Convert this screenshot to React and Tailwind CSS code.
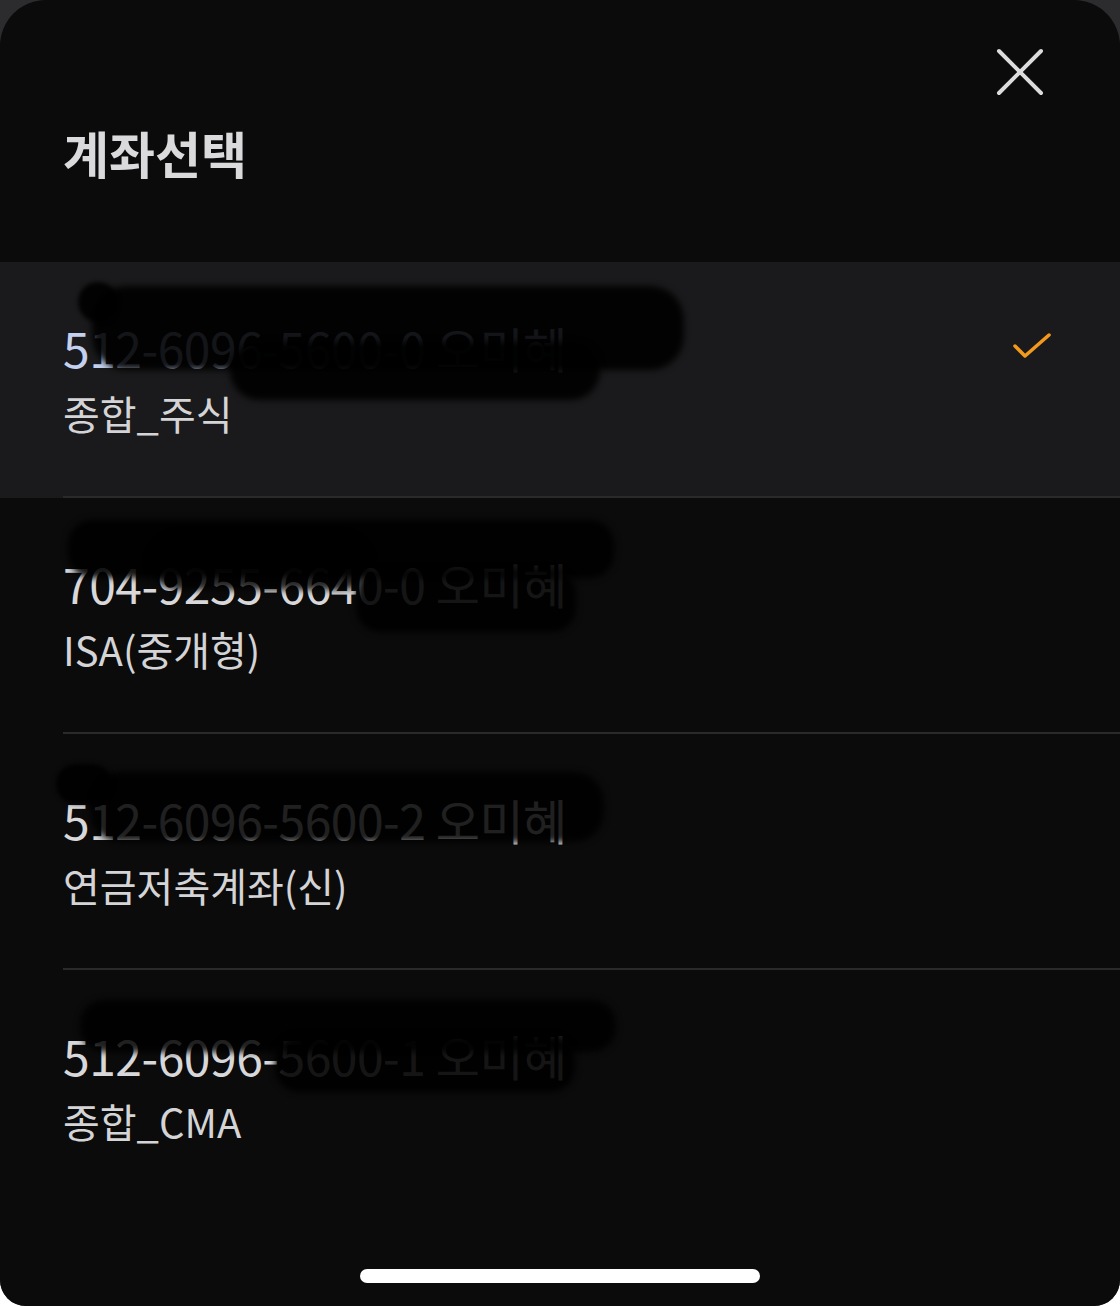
const accounts = [
  { no: '512-6096-5600-0 오미혜', name: '종합_주식', selected: true },
  { no: '704-9255-6640-0 오미혜', name: 'ISA(중개형)' },
  { no: '512-6096-5600-2 오미혜', name: '연금저축계좌(신)' },
  { no: '512-6096-5600-1 오미혜', name: '종합_CMA' },
];

// redaction scribbles over the account numbers
function Scribble({ index }) {
  if (index === 0) {
    return (
      <>
        <div className="absolute left-[92px] top-[24px] h-[84px] w-[592px] rounded-[34px] bg-black/90 blur-[3px]" />
        <div className="absolute left-[230px] top-[80px] h-[58px] w-[370px] rounded-full bg-black/90 blur-[3px]" />
        <div className="absolute left-[78px] top-[20px] h-[40px] w-[40px] rounded-full bg-black/90 blur-[2px]" />
      </>
    );
  }
  if (index === 1) {
    return (
      <>
        <div className="absolute left-[68px] top-[22px] h-[58px] w-[546px] rounded-[24px] bg-black/90 blur-[3px]" />
        <div className="absolute left-[150px] top-[36px] h-[56px] w-[220px] rounded-full bg-black/80 blur-[3px]" />
        <div className="absolute left-[356px] top-[72px] h-[62px] w-[220px] rounded-[24px] bg-black/90 blur-[3px]" />
      </>
    );
  }
  if (index === 2) {
    return (
      <>
        <div className="absolute left-[90px] top-[38px] h-[70px] w-[514px] rounded-[30px] bg-black/85 blur-[3px]" />
        <div className="absolute left-[56px] top-[30px] h-[40px] w-[56px] rounded-full bg-black/90 blur-[2px]" />
      </>
    );
  }
  return (
    <>
      <div className="absolute left-[80px] top-[30px] h-[52px] w-[536px] rounded-[24px] bg-black/85 blur-[3px]" />
      <div className="absolute left-[275px] top-[66px] h-[56px] w-[300px] rounded-[24px] bg-black/90 blur-[3px]" />
    </>
  );
}

export default function App() {
  return (
    <div className="min-h-screen bg-white" style={{ fontFamily: '"Noto Sans CJK KR", "Noto Sans", sans-serif' }}>
      <div className="h-[1306px] overflow-hidden rounded-b-[26px] bg-[#2c2c2e]">
        <div className="flex h-full flex-col rounded-t-[46px] bg-[#0b0b0c]">
          <div className="flex justify-end pr-[76px] pt-[48px]">
            <button className="h-[48px] w-[48px] text-[#dcdcde]">
              <svg viewBox="0 0 48 48" className="h-full w-full" fill="none" stroke="currentColor" strokeWidth="4" strokeLinecap="round">
                <path d="M3 3 L45 45 M45 3 L3 45" />
              </svg>
            </button>
          </div>
          <h1 className="mt-[28px] pl-[63px] text-[50px] font-bold leading-[56px] text-[#dadadc]">계좌선택</h1>

          <div className="mt-[82px]">
            {accounts.map((a, i) => (
              <div key={a.no} className={`relative ${a.selected ? 'bg-[#1a1a1c]' : ''}`}>
                <div className="flex h-[234px] flex-col justify-center gap-[18px] pl-[63px] pr-[68px]">
                  <div className="flex items-center justify-between">
                    <div className={`text-[48px] leading-[50px] tracking-[-0.01em] ${a.selected ? 'text-[#c3d1ee]' : 'text-[#d8d8da]'}`}>{a.no}</div>
                    {a.selected && (
                      <svg viewBox="0 0 40 30" className="h-[30px] w-[40px]" fill="none" stroke="#f39a1c" strokeWidth="3.5" strokeLinecap="round" strokeLinejoin="round">
                        <path d="M3 14 L13 24 L37 3" />
                      </svg>
                    )}
                  </div>
                  <div className="text-[40px] leading-[46px] text-[#d4d4d6]">{a.name}</div>
                </div>
                <Scribble index={i} />
                {i < accounts.length - 1 && <div className="ml-[63px] h-[2px] bg-[#2a2a2c]" />}
              </div>
            ))}
          </div>

          <div className="mt-auto flex justify-center pb-[23px]">
            <div className="h-[14px] w-[400px] rounded-full bg-white" />
          </div>
        </div>
      </div>
    </div>
  );
}
